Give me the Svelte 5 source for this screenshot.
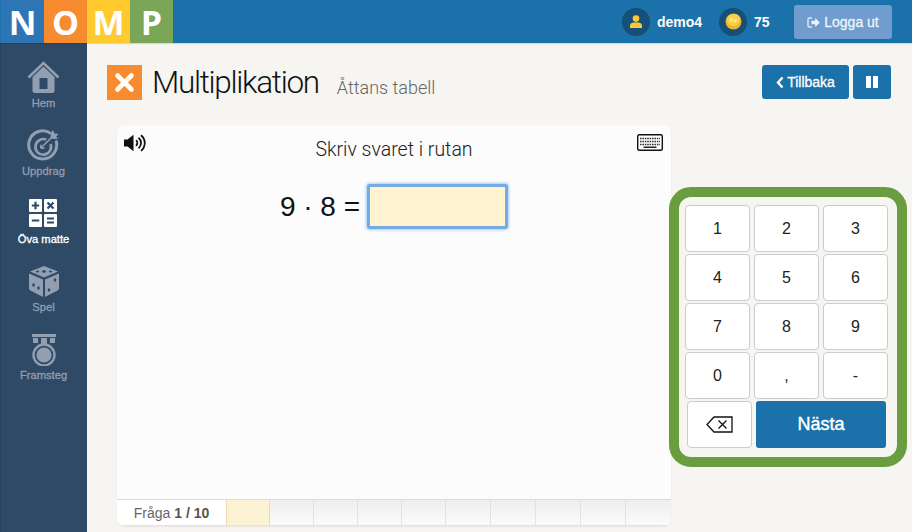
<script>
  const nav = [
    { label: 'Hem', icon: 'home' },
    { label: 'Uppdrag', icon: 'target' },
    { label: 'Öva matte', icon: 'calc', active: true },
    { label: 'Spel', icon: 'dice' },
    { label: 'Framsteg', icon: 'medal' }
  ];
  const logo = [
    { ch: 'N', bg: '#2e75b6' },
    { ch: 'O', bg: '#f68b2f' },
    { ch: 'M', bg: '#ffca2e' },
    { ch: 'P', bg: '#7ba658' }
  ];
  const keys = ['1', '2', '3', '4', '5', '6', '7', '8', '9', '0', ',', '-'];
  const cells = Array.from({ length: 10 }, (_, i) => i);
</script>

<div class="page">
  <header class="top">
    <div class="logo">
      {#each logo as l}
        <span class="letter" style="background:{l.bg}">{l.ch}</span>
      {/each}
    </div>
    <div class="top-right">
      <span class="badge">
        <svg width="14" height="14" viewBox="0 0 14 14"><circle cx="7" cy="3.600" r="3.300" fill="#fdc93a"/><path d="M1 13v-2.200C1 8.600 3 7.400 4.600 7.400h4.800C11 7.400 13 8.600 13 10.800V13z" fill="#fdc93a"/></svg>
      </span>
      <span class="user">demo4</span>
      <span class="badge coin-badge">
        <svg width="17" height="17" viewBox="0 0 17 17"><circle cx="8.500" cy="8.500" r="8" fill="#eeb52e"/><ellipse cx="8.500" cy="7" rx="6.600" ry="6" fill="#fad04a"/><path d="M6 9V5.400l5 3.600V5.400" stroke="#fff3c4" fill="none" stroke-width="1"/></svg>
      </span>
      <span class="score">75</span>
      <button class="logout">
        <svg width="13" height="11" viewBox="0 0 13 11"><path d="M5 1H2.500A1.500 1.500 0 0 0 1 2.500v6A1.500 1.500 0 0 0 2.500 10H5" stroke="#dfe9f4" stroke-width="1.400" fill="none"/><path d="M4.500 3.700h3.700V1l4.600 4.500L8.200 10V7.300H4.500z" fill="#eef3f9"/></svg>
        Logga ut
      </button>
    </div>
  </header>

  <div class="body">
    <nav class="side">
      {#each nav as n}
        <div class="nav-item" class:active={n.active}>
          <span class="nav-icon">
            {#if n.icon === 'home'}
              <svg width="33" height="33" viewBox="0 0 33 33"><path d="M1.500 16.500 16.500 2l15 14.500" fill="none" stroke="#929fb0" stroke-width="2.600"/><path d="M5.500 16 16.500 5.500 27.500 16v14a2 2 0 0 1-2 2h-18a2 2 0 0 1-2-2z" fill="#929fb0"/><rect x="12.500" y="17" width="8" height="11" fill="#2f4a66"/></svg>
            {:else if n.icon === 'target'}
              <svg width="33" height="33" viewBox="0 0 33 33"><g fill="none" stroke="#929fb0"><path d="M24 4.600A14 14 0 1 0 29 11.500" stroke-width="3"/><path d="M19.500 10.800A7.800 7.800 0 1 0 23.500 15" stroke-width="2.600"/></g><circle cx="15.500" cy="17.500" r="2.600" fill="#929fb0"/><path d="M15.500 17.500 26 7" stroke="#2f4a66" stroke-width="4"/><path d="M15.500 17.500 26 7" stroke="#929fb0" stroke-width="1.600"/><path d="M24 4l2-3 1.500 3.500L31.500 5l-2.500 3 3 1.500-5.500.5-3-1z" fill="#929fb0"/></svg>
            {:else if n.icon === 'calc'}
              <svg width="30" height="30" viewBox="0 0 30 30"><rect x="1" y="1" width="13" height="13" rx="1" fill="#fff"/><rect x="16" y="1" width="13" height="13" rx="1" fill="#fff"/><rect x="1" y="16" width="13" height="13" rx="1" fill="#fff"/><rect x="16" y="16" width="13" height="13" rx="1" fill="#fff"/><g stroke="#2f4a66" stroke-width="2.200"><path d="M3.800 7.500h7.400M7.500 3.800v7.400M19.500 4.500l6 6M25.500 4.500l-6 6M3.800 22.500h7.400M19 20.500h7M19 24.500h7"/></g></svg>
            {:else if n.icon === 'dice'}
              <svg width="32" height="33" viewBox="0 0 32 33"><path d="M16 1 30 6.500 16 12.500 2 6.500z" fill="#929fb0"/><path d="M1 8.500 15 14.500V32L2.500 25.500A2.500 2.500 0 0 1 1 23z" fill="#929fb0"/><path d="M31 8.500 17 14.500V32l12.500-6.500A2.500 2.500 0 0 0 31 23z" fill="#929fb0"/><g fill="#2f4a66"><ellipse cx="16" cy="6.500" rx="2" ry="1.300"/><ellipse cx="9.500" cy="6.500" rx="1.600" ry="1"/><ellipse cx="22.500" cy="6.500" rx="1.600" ry="1"/><ellipse cx="5.500" cy="20" rx="1.300" ry="1.700"/><ellipse cx="10.500" cy="23" rx="1.300" ry="1.700"/><ellipse cx="27" cy="15" rx="1.300" ry="1.700"/><ellipse cx="21" cy="25" rx="1.300" ry="1.700"/></g></svg>
            {:else}
              <svg width="28" height="33" viewBox="0 0 28 33"><path d="M2 1h24v3H2z" fill="#929fb0"/><path d="M3 5h5v5H3zM20 5h5v5h-5z" fill="#929fb0"/><path d="M11 5h6v7h-6z" fill="#929fb0"/><circle cx="14" cy="22" r="10.500" fill="none" stroke="#929fb0" stroke-width="2.400"/><circle cx="14" cy="22" r="7.600" fill="#929fb0"/></svg>
            {/if}
          </span>
          <span class="nav-label">{n.label}</span>
        </div>
      {/each}
    </nav>

    <main class="main">
      <div class="head">
        <div class="title-box">
          <svg width="35" height="35" viewBox="0 0 35 35"><rect width="35" height="35" fill="#f68b2f"/><path d="M10.500 10.500l14 14M24.500 10.500l-14 14" stroke="#fff" stroke-width="4.600" stroke-linecap="round"/></svg>
          <h1>Multiplikation</h1>
          <span class="sub">Åttans tabell</span>
        </div>
        <div class="head-btns">
          <button class="btn back">
            <svg width="8" height="13" viewBox="0 0 8 13"><path d="M6.500 1.500 2 6.500l4.500 5" fill="none" stroke="#fff" stroke-width="2.400"/></svg>
            Tillbaka
          </button>
          <button class="btn pause" aria-label="Paus">
            <svg width="12" height="12" viewBox="0 0 12 12"><path d="M0 0h5v12H0zM7 0h5v12H7z" fill="#fff"/></svg>
          </button>
        </div>
      </div>

      <div class="work">
        <section class="card">
          <div class="card-top">
            <svg width="23" height="18" viewBox="0 0 23 18"><path d="M0 5.500h3.500L9.500 .8v16.400L3.500 12.500H0z" fill="#111"/><g fill="none" stroke="#111" stroke-width="1.800"><path d="M12 6.300a3.400 3.400 0 0 1 0 5.400"/><path d="M14.500 3.800a6.600 6.600 0 0 1 0 10.400"/><path d="M17 1.200a10 10 0 0 1 0 15.600"/></g></svg>
            <svg width="26" height="17" viewBox="0 0 26 17"><rect x=".7" y=".7" width="24.600" height="15.600" rx="1.500" fill="#fff" stroke="#111" stroke-width="1.400"/><path d="M3 4.500h20M3 7.500h20M3 10.500h20" stroke="#333" stroke-width="1.400" stroke-dasharray="1.600 .8"/><path d="M6.500 13.300h13" stroke="#222" stroke-width="1.400"/></svg>
          </div>
          <p class="instr">Skriv svaret i rutan</p>
          <div class="eq">
            <span>9 · 8 =</span>
            <span class="answer"></span>
          </div>
          <div class="progress">
            <span class="count">Fråga <b>1 / 10</b></span>
            <div class="cells">
              {#each cells as c}
                <span class="cell" class:current={c === 0}></span>
              {/each}
            </div>
          </div>
        </section>

        <aside class="keypad">
          <div class="keys">
            {#each keys as k}
              <button class="key">{k}</button>
            {/each}
          </div>
          <div class="last">
            <button class="key erase" aria-label="Radera">
              <svg width="27" height="17" viewBox="0 0 27 17"><path d="M26 1H8L1 8.500 8 16h18z" fill="none" stroke="#111" stroke-width="1.300"/><path d="M12.500 4.500l8 8M20.500 4.500l-8 8" stroke="#111" stroke-width="1.300"/></svg>
            </button>
            <button class="next">Nästa</button>
          </div>
        </aside>
      </div>
    </main>
  </div>
</div>

<style>
  :global(body) {
    margin: 0;
    background: #f6f5f1;
    font-family: "Liberation Sans", Arial, sans-serif;
    overflow: hidden;
  }
  button {
    font-family: inherit;
    cursor: pointer;
  }
  .page {
    width: 912px;
    height: 532px;
    display: flex;
    flex-direction: column;
    overflow: hidden;
  }
  .top {
    height: 43px;
    flex: none;
    background: #1b71a9;
    display: flex;
    justify-content: space-between;
    align-items: flex-start;
    padding-left: 1px;
    box-sizing: border-box;
    box-shadow: 0 1px 1px rgba(0, 0, 0, .12);
    position: relative;
    z-index: 1;
  }
  .logo {
    display: flex;
  }
  .letter {
    width: 43px;
    height: 43px;
    display: flex;
    align-items: center;
    justify-content: center;
    color: #fff;
    font: 700 34px "Open Sans", sans-serif;
  }
  .top-right {
    display: flex;
    align-items: center;
    height: 43px;
    padding-right: 20px;
    color: #fff;
    font-weight: 700;
    font-size: 14px;
  }
  .badge {
    width: 28px;
    height: 28px;
    border-radius: 50%;
    background: #164f78;
    display: flex;
    align-items: center;
    justify-content: center;
  }
  .user {
    margin-left: 7px;
    width: 62px;
  }
  .score {
    margin-left: 7px;
    width: 40px;
  }
  .logout {
    width: 98px;
    height: 34px;
    margin-top: 1px;
    border: 0;
    border-radius: 3px;
    background: #709dcd;
    color: #eef3f9;
    font-size: 14px;
    font-weight: 400;
    -webkit-text-stroke: .3px;
    display: flex;
    align-items: center;
    justify-content: center;
    gap: 4px;
    padding: 0;
  }
  .body {
    flex: 1;
    display: flex;
    min-height: 0;
  }
  .side {
    width: 87px;
    flex: none;
    background: #2f4a66;
    box-sizing: border-box;
    padding-top: 14px;
    display: flex;
    flex-direction: column;
    align-items: center;
    box-shadow: inset 1px 0 0 #2a4159;
  }
  .nav-item {
    height: 68px;
    display: flex;
    flex-direction: column;
    align-items: center;
    color: #929fb0;
    font-size: 11.200px;
    -webkit-text-stroke: .3px;
  }
  .nav-item.active {
    color: #fff;
  }
  .nav-icon {
    height: 40px;
    display: flex;
    align-items: center;
    justify-content: center;
  }
  .nav-label {
    line-height: 13px;
  }
  .main {
    flex: 1;
    min-width: 0;
    padding: 22px 21px 0 20px;
    display: flex;
    flex-direction: column;
  }
  .head {
    display: flex;
    justify-content: space-between;
    height: 60px;
    flex: none;
  }
  .title-box {
    display: flex;
    align-items: flex-start;
  }
  h1 {
    margin: 0 0 0 10px;
    font: 300 31.500px/35px Roboto, sans-serif;
    letter-spacing: -1.300px;
    color: #111;
  }
  .sub {
    margin: 12px 0 0 18px;
    font: 300 18px/22px Roboto, sans-serif;
    color: #666;
  }
  .head-btns {
    display: flex;
    gap: 4px;
  }
  .btn {
    height: 34px;
    border: 0;
    border-radius: 3px;
    background: #1b71a9;
    color: #fff;
    font-size: 14px;
    font-weight: 400;
    -webkit-text-stroke: .3px;
    display: flex;
    align-items: center;
    justify-content: center;
    padding: 0;
  }
  .back {
    width: 87px;
    gap: 3px;
  }
  .pause {
    width: 38px;
  }
  .work {
    display: flex;
    align-items: flex-start;
    margin-left: 10px;
  }
  .card {
    width: 554px;
    height: 401px;
    flex: none;
    background: #fcfcfc;
    border-radius: 8px;
    box-sizing: border-box;
    display: flex;
    flex-direction: column;
    box-shadow: 0 1px 2px rgba(0, 0, 0, .06);
    overflow: hidden;
  }
  .card-top {
    display: flex;
    justify-content: space-between;
    padding: 9px 8px 0 7px;
    height: 18px;
    flex: none;
  }
  .instr {
    margin: -14px 0 0;
    text-align: center;
    font: 300 19.500px/24px Roboto, sans-serif;
    color: #222;
  }
  .eq {
    margin-top: 22px;
    display: flex;
    justify-content: center;
    align-items: center;
    gap: 7px;
    font-size: 28px;
    color: #111;
  }
  .answer {
    width: 141px;
    height: 45px;
    box-sizing: border-box;
    background: #fff3d1;
    border: 3px solid #76abe2;
    border-radius: 3px;
    box-shadow: 0 0 3px 1px #a5cdf5;
  }
  .progress {
    margin-top: auto;
    height: 27px;
    display: flex;
    flex: none;
    box-sizing: border-box;
    border-top: 1px solid #dcdcdc;
    border-bottom: 1px solid #e2e2e2;
  }
  .count {
    width: 109px;
    background: #fff;
    text-align: center;
    font-size: 14px;
    line-height: 26px;
    color: #666;
  }
  .count b {
    color: #555;
  }
  .cells {
    flex: 1;
    display: grid;
    grid-template-columns: repeat(5, 44px) repeat(5, 45px);
  }
  .cell {
    background: linear-gradient(#eeeeee, #fbfbfb);
    border-right: 1px solid #e2e2e2;
  }
  .cell:last-child {
    border-right: 0;
  }
  .cell.current {
    background: #fcf2d4;
    border-left: 1px solid #eedcae;
    border-right: 1px solid #eedcae;
  }
  .keypad {
    flex: none;
    width: 238px;
    height: 280px;
    margin: 62px 0 0 -2px;
    box-sizing: border-box;
    background: #f6f5f1;
    border: 10px solid #6a9d3d;
    border-radius: 22px;
    padding: 8px 6px 0 6px;
    position: relative;
  }
  .keys {
    display: grid;
    grid-template-columns: repeat(3, 65px);
    grid-auto-rows: 47px;
    gap: 2px 4px;
  }
  .key {
    background: #fff;
    border: 1px solid #cccccc;
    border-radius: 4px;
    font-size: 16px;
    color: #222;
    padding: 0;
  }
  .last {
    display: flex;
    gap: 4px;
    margin: 2px 0 0 2px;
    height: 47px;
  }
  .erase {
    width: 65px;
    display: flex;
    align-items: center;
    justify-content: center;
  }
  .next {
    width: 130px;
    border: 0;
    border-radius: 3px;
    background: #1b71a9;
    color: #fff;
    font-size: 18px;
    font-weight: 400;
    -webkit-text-stroke: .4px;
    padding: 0;
  }
</style>
